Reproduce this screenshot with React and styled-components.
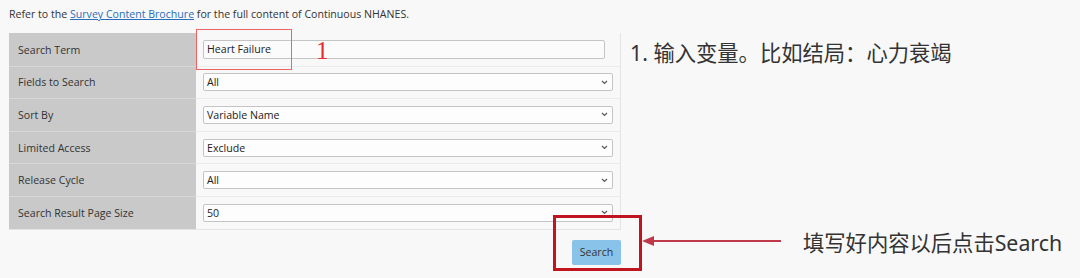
import React from "react";
import styled, { createGlobalStyle } from "styled-components";

const GlobalStyle = createGlobalStyle`
  body {
    margin: 0;
    background: #f8f8f8;
    font-family: "Open Sans", "Liberation Sans", sans-serif;
  }
`;

const StPage = styled.div`
  width: 1080px;
  height: 278px;
  display: flex;
  overflow: hidden;
`;

const StLeft = styled.div`
  width: 612px;
  padding: 6px 0 0 9px;
  position: relative;
`;

const StIntro = styled.p`
  margin: 0 0 11px;
  font-size: 10.6px;
  line-height: 16px;
  color: #333;
`;

const StLink = styled.a`
  color: #2a6ebb;
  text-decoration: underline;
`;

const StTable = styled.div`
  display: grid;
  grid-template-columns: 187px 1fr;
  border-right: 1px solid #e4e4e4;
  border-bottom: 1px solid #e4e4e4;
`;

const StLabel = styled.div`
  background: #c9c9c9;
  height: 32.6px;
  box-sizing: border-box;
  display: flex;
  align-items: center;
  padding-left: 9px;
  font-size: 10.6px;
  color: #333;
  border-top: 1px solid ${(p) => (p.$first ? "#c9c9c9" : "#d8d8d8")};
`;

const StCell = styled.div`
  height: 32.6px;
  box-sizing: border-box;
  display: flex;
  align-items: center;
  padding: 0 7px;
  border-top: 1px solid ${(p) => (p.$first ? "transparent" : "#ebebeb")};
  position: relative;
`;

const StInput = styled.div`
  width: 402px;
  height: 19px;
  box-sizing: border-box;
  border: 1px solid #c4c4c4;
  border-radius: 2px;
  background: #fbfbfb;
  font-size: 10.6px;
  line-height: 17px;
  padding-left: 3px;
  color: #222;
`;

const StSelect = styled.div`
  width: 410px;
  height: 18px;
  box-sizing: border-box;
  border: 1px solid #c4c4c4;
  border-radius: 2px;
  background: #fdfdfd;
  font-size: 10.6px;
  line-height: 16px;
  padding: 0 3px;
  color: #222;
  display: flex;
  justify-content: space-between;
  align-items: center;
`;

const StChevron = styled.svg`
  width: 7px;
  height: 5px;
  margin-right: 1px;
`;

const StMarkBox = styled.div`
  position: absolute;
  z-index: 2;
  border: ${(p) => p.$w || 1}px solid ${(p) => p.$color || "#ee6464"};
  left: ${(p) => p.$x}px;
  top: ${(p) => p.$y}px;
  width: ${(p) => p.$width}px;
  height: ${(p) => p.$height}px;
  box-sizing: border-box;
  pointer-events: none;
`;

const StMarkNum = styled.span`
  position: absolute;
  left: 120px;
  top: 3px;
  color: #e8282f;
  font-family: "Liberation Serif", serif;
  font-size: 25px;
  line-height: 28px;
`;

const StFooter = styled.div`
  display: flex;
  justify-content: flex-end;
  padding: 10px 0 0;
  position: relative;
`;

const StButton = styled.button`
  width: 49px;
  height: 25px;
  border: none;
  border-radius: 2px;
  background: #8ac3e9;
  color: #333;
  font-family: "Open Sans", sans-serif;
  font-size: 10.6px;
  padding: 0;
`;

const StRight = styled.div`
  flex: 1;
  position: relative;
  font-family: "Noto Sans", "Noto Sans CJK SC", sans-serif;
  color: #333;
  font-size: 21.3px;
`;

const StNote = styled.div`
  position: absolute;
  left: ${(p) => p.$x}px;
  top: ${(p) => p.$y}px;
  white-space: nowrap;
  line-height: 28px;
`;

const StArrow = styled.svg`
  position: absolute;
  left: 21px;
  top: 234px;
`;

const rows = [
  { label: "Search Term", input: "Heart Failure" },
  { label: "Fields to Search", value: "All" },
  { label: "Sort By", value: "Variable Name" },
  { label: "Limited Access", value: "Exclude" },
  { label: "Release Cycle", value: "All" },
  { label: "Search Result Page Size", value: "50" },
];

function Chevron() {
  return (
    <StChevron viewBox="0 0 7 5">
      <path d="M1 1 L3.5 3.5 L6 1" fill="none" stroke="#555" strokeWidth="1.1" />
    </StChevron>
  );
}

export default function App() {
  return (
    <>
      <GlobalStyle />
      <StPage>
        <StLeft>
          <StIntro>
            Refer to the <StLink href="#">Survey Content Brochure</StLink> for the full content of
            Continuous NHANES.
          </StIntro>
          <StTable>
            {rows.map((r, i) => (
              <React.Fragment key={r.label}>
                <StLabel $first={i === 0}>{r.label}</StLabel>
                <StCell $first={i === 0}>
                  {r.input ? (
                    <>
                      <StInput>{r.input}</StInput>
                      <StMarkBox $x={0} $y={-5} $width={96} $height={41} />
                      <StMarkNum>1</StMarkNum>
                    </>
                  ) : (
                    <StSelect>
                      {r.value}
                      <Chevron />
                    </StSelect>
                  )}
                </StCell>
              </React.Fragment>
            ))}
          </StTable>
          <StFooter>
            <StButton>Search</StButton>
            <StMarkBox $x={544} $y={-15} $width={89} $height={56} $w={3} $color="#c0151e" />
          </StFooter>
        </StLeft>
        <StRight>
          <StNote $x={9} $y={39}>1. 输入变量。比如结局：心力衰竭</StNote>
          <StArrow width="140" height="14" viewBox="0 0 140 14">
            <line x1="10" y1="7" x2="139" y2="7" stroke="#c0394b" strokeWidth="2" />
            <polygon points="0,7 12,2 12,12" fill="#c0394b" />
          </StArrow>
          <StNote $x={182} $y={229}>填写好内容以后点击Search</StNote>
        </StRight>
      </StPage>
    </>
  );
}
